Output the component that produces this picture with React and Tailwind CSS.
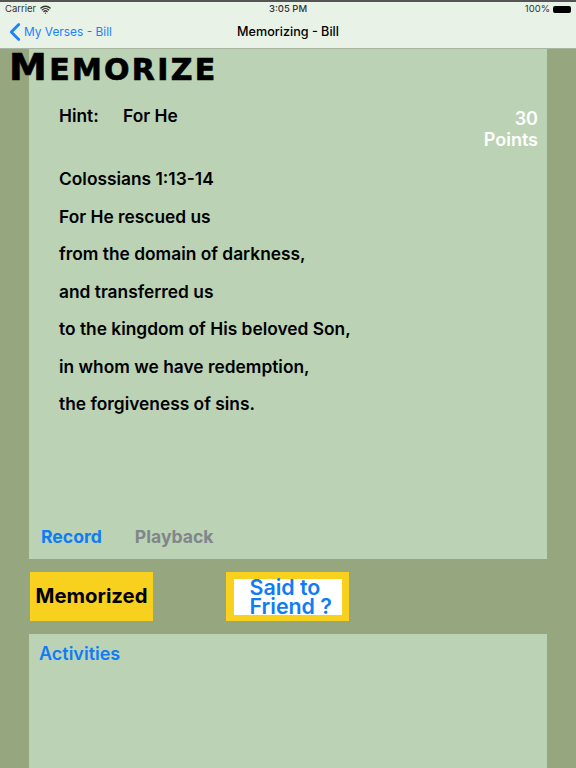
import { ChevronLeft, Wifi } from 'lucide-react';

const lines = [
  'Colossians 1:13-14',
  'For He rescued us',
  'from the domain of darkness,',
  'and transferred us',
  'to the kingdom of His beloved Son,',
  'in whom we have redemption,',
  'the forgiveness of sins.',
];

export default function App() {
  return (
    <div className="w-[576px] h-[768px] overflow-hidden flex flex-col bg-[#96a77f] font-['Inter',sans-serif] text-black">
      <header className="h-[49px] shrink-0 flex flex-col bg-[#e9f2e6] border-t-2 border-[#555] border-b border-b-[#a9b5a0]">
        <div className="h-[13px] pt-[1px] px-[5px] flex items-center justify-between text-[9.5px] leading-none text-[#333]">
          <div className="w-[120px] flex items-center gap-[4px]">
            <span>Carrier</span>
            <Wifi size={11} strokeWidth={3} />
          </div>
          <span className="font-medium">3:05 PM</span>
          <div className="w-[120px] flex items-center justify-end gap-[3px]">
            <span>100%</span>
            <span className="w-[18px] h-[7px] bg-black rounded-[2px]" />
          </div>
        </div>
        <div className="relative flex-1 flex items-center justify-center pt-[2px]">
          <div className="absolute left-0 top-[2px] flex items-center text-[#1a82fb] text-[11.9px]">
            <ChevronLeft size={30} strokeWidth={2.2} />
            <span className="-ml-[6px]">My Verses - Bill</span>
          </div>
          <span className="text-[12.6px] font-medium">Memorizing - Bill</span>
        </div>
      </header>

      <div className="flex-1 min-h-0 px-[29px] flex flex-col">
        <main className="relative h-[510px] shrink-0 bg-[#bbd3b4] flex flex-col">
          <h1 className="absolute left-[-20px] top-[-2px] font-['DejaVu_Sans',sans-serif] font-bold leading-[40px] tracking-[2.3px] uppercase whitespace-nowrap [-webkit-text-stroke:0.7px_black]">
            <span className="text-[38px]">M</span>
            <span className="text-[30px]">emorize</span>
          </h1>
          <div className="absolute right-[9px] top-[59px] text-right text-white text-[18px] leading-[21px] font-semibold">
            <div>30</div>
            <div>Points</div>
          </div>
          <div className="pl-[30px] pt-[55px] flex text-[17.35px] leading-[24px] font-semibold">
            <span className="w-[64px]">Hint:</span>
            <span>For He</span>
          </div>
          <div className="pl-[30px] pt-[39px] flex flex-col gap-[13.5px] text-[17.35px] leading-[24px] font-semibold">
            {lines.map(line => (
              <p key={line}>{line}</p>
            ))}
          </div>
          <div className="mt-auto pl-[12px] pb-[10px] flex gap-[33px] text-[17.6px] leading-[24px] font-bold">
            <span className="text-[#0f7cf4]">Record</span>
            <span className="text-[#80868a]">Playback</span>
          </div>
        </main>

        <div className="h-[75px] shrink-0 flex items-center pl-[1px]">
          <div className="w-[123px] h-[49px] bg-[#f8d01e] flex items-center justify-center text-[20.3px] font-bold">
            Memorized
          </div>
          <div className="ml-[73px] w-[123px] h-[49px] bg-[#f8d01e] flex items-center justify-center">
            <div className="w-[108px] h-[36px] bg-white text-[#0f7cf4] text-[21.4px] leading-[19px] font-semibold pl-[16px] flex items-center whitespace-nowrap">
              <p>Said to<br />Friend ?</p>
            </div>
          </div>
        </div>

        <section className="flex-1 bg-[#bbd3b4] pl-[10px] pt-[8px]">
          <h2 className="text-[18px] leading-[24px] font-semibold text-[#0f7cf4]">Activities</h2>
        </section>
      </div>
    </div>
  );
}
